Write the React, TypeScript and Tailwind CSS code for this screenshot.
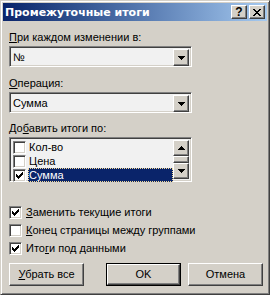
const raised =
  'border border-t-white border-l-white border-b-[#404040] border-r-[#404040] shadow-[inset_-1px_-1px_0_#808080] bg-[#d4d0c8]';
const sunken =
  'border border-t-[#808080] border-l-[#808080] border-b-white border-r-white shadow-[inset_1px_1px_0_#404040,inset_-1px_-1px_0_#d4d0c8]';

function Arrow({ up }: { up?: boolean }) {
  return (
    <svg width="7" height="4" viewBox="0 0 7 4" shapeRendering="crispEdges" className={up ? 'rotate-180' : ''}>
      <path d="M0 0h7v1h-7zM1 1h5v1h-5zM2 2h3v1h-3zM3 3h1v1h-1z" fill="#000" />
    </svg>
  );
}

function Check() {
  return (
    <svg width="7" height="7" viewBox="0 0 7 7" shapeRendering="crispEdges">
      <path
        d="M6 0h1v3h-1zM5 1h1v3h-1zM4 2h1v3h-1zM3 3h1v3h-1zM2 4h1v3h-1zM1 3h1v3h-1zM0 2h1v3h-1z"
        fill="#000"
      />
    </svg>
  );
}

function Box({ checked }: { checked?: boolean }) {
  return (
    <div className={`${sunken} w-[13px] h-[13px] shrink-0 bg-white flex items-center justify-center`}>
      {checked && <Check />}
    </div>
  );
}

function Combo({ value }: { value: string }) {
  return (
    <div className={`${sunken} w-[183px] h-[21px] bg-[#f1f1f1] flex p-[2px]`}>
      <div className="flex-1 pl-[1px] leading-[17px]">{value}</div>
      <div className={`${raised} w-[16px] h-[17px] flex items-center justify-center`}>
        <Arrow />
      </div>
    </div>
  );
}

function Option({ label, checked }: { label: React.ReactNode; checked?: boolean }) {
  return (
    <div className="flex items-center gap-[4px] h-[13px]">
      <Box checked={checked} />
      <span>{label}</span>
    </div>
  );
}

function Btn({ children, def }: { children: React.ReactNode; def?: boolean }) {
  return (
    <div className={`w-[75px] h-[23px] ${def ? 'border border-black' : ''}`}>
      <div className={`${raised} w-full h-full flex items-center justify-center`}>{children}</div>
    </div>
  );
}

const items = ['Кол-во', 'Цена', 'Сумма'];

export default function App() {
  return (
    <div className="w-[270px] h-[295px] bg-[#d4d0c8] border border-t-[#d4d0c8] border-l-[#d4d0c8] border-b-[#404040] border-r-[#404040] shadow-[inset_1px_1px_0_#fff,inset_-1px_-1px_0_#808080] p-[2px] flex flex-col font-['Liberation_Sans',sans-serif] text-[11px] leading-[13px] text-black">
      <div className="h-[18px] shrink-0 flex items-center pl-[2px] pr-[2px] bg-gradient-to-r from-[#0a246a] to-[#a6caf0]">
        <span className="flex-1 text-white font-bold text-[11px] font-['DejaVu_Sans',sans-serif]">Промежуточные итоги</span>
        <div className={`${raised} w-[16px] h-[14px] flex items-center justify-center font-bold text-[12px] leading-[12px]`}>?</div>
        <div className={`${raised} w-[16px] h-[14px] ml-[2px] flex items-center justify-center`}>
          <svg width="8" height="7" viewBox="0 0 8 7" shapeRendering="crispEdges">
            <path
              d="M0 0h2v1h-2zM6 0h2v1h-2zM1 1h2v1h-2zM5 1h2v1h-2zM2 2h4v1h-4zM3 3h2v1h-2zM2 4h4v1h-4zM1 5h2v1h-2zM5 5h2v1h-2zM0 6h2v1h-2zM6 6h2v1h-2z"
              fill="#000"
            />
          </svg>
        </div>
      </div>

      <div className="flex flex-col pl-[6px]">
        <div className="mt-[10px]">
          <u>П</u>ри каждом изменении в:
        </div>
        <div className="mt-[2px]">
          <Combo value="№" />
        </div>

        <div className="mt-[10px]">
          <u>О</u>перация:
        </div>
        <div className="mt-[2px]">
          <Combo value="Сумма" />
        </div>

        <div className="mt-[9px]">
          До<u>б</u>авить итоги по:
        </div>
        <div className={`${sunken} mt-[2px] w-[183px] h-[45px] bg-[#f1f1f1] flex p-[2px]`}>
          <div className="flex-1 flex flex-col">
            {items.map((it, i) => (
              <div key={it} className="flex items-center h-[14px] pl-[1px]">
                <Box checked={i === 2} />
                <span
                  className={`ml-[2px] pl-[1px] flex-1 h-[14px] leading-[14px] ${
                    i === 2 ? 'bg-[#0a246a] text-white outline-1 outline-dotted outline-[#f5db95] -outline-offset-1' : ''
                  }`}
                >
                  {it}
                </span>
              </div>
            ))}
          </div>
          <div className="w-[16px] flex flex-col">
            <div className={`${raised} h-[16px] flex items-center justify-center`}>
              <Arrow up />
            </div>
            <div className={`${raised} flex-1`} />
            <div className={`${raised} h-[16px] flex items-center justify-center`}>
              <Arrow />
            </div>
          </div>
        </div>

        <div className="mt-[24px] flex flex-col gap-[5px]">
          <Option checked label={<><u>З</u>аменить текущие итоги</>} />
          <Option label={<><u>К</u>онец страницы между группами</>} />
          <Option checked label={<>Ито<u>г</u>и под данными</>} />
        </div>

        <div className="mt-[8px] flex">
          <Btn>
            <span><u>У</u>брать все</span>
          </Btn>
          <div className="ml-[22px]">
            <Btn def>OK</Btn>
          </div>
          <div className="ml-[7px]">
            <Btn>Отмена</Btn>
          </div>
        </div>
      </div>
    </div>
  );
}
